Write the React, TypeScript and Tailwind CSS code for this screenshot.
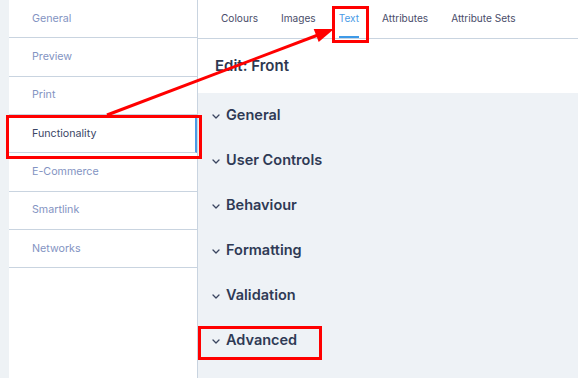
import React from "react";

const sideItems = ["General", "Preview", "Print", "Functionality", "E-Commerce", "Smartlink", "Networks"];
const tabs = ["Colours", "Images", "Text", "Attributes", "Attribute Sets"];
const sections = ["General", "User Controls", "Behaviour", "Formatting", "Validation", "Advanced"];

function Chevron() {
  return (
    <svg width="8" height="5" viewBox="0 0 8 5" className="mt-[2px]">
      <polyline points="1,1 4,4 7,1" fill="none" stroke="#3a4560" strokeWidth="1.3" strokeLinecap="round" strokeLinejoin="round" />
    </svg>
  );
}

export default function App() {
  return (
    <div
      className="relative flex w-[578px] h-[378px] overflow-hidden bg-white"
      style={{ fontFamily: "Inter, 'Noto Sans', sans-serif" }}
    >
      <div className="w-[9px] shrink-0 bg-[#eef2f5]" />
      <div className="w-[189px] shrink-0 border-r border-[#c9d4e0] flex flex-col">
        {sideItems.map((s) => {
          const active = s === "Functionality";
          return (
            <div
              key={s}
              className={`h-[38.33px] shrink-0 border-b border-[#c9d4e0] flex items-center pl-[23px] text-[10.7px] ${
                active ? "text-[#3b4666] border-r-2 border-r-[#4a9be6]" : "text-[#8393c2]"
              }`}
            >
              {s}
            </div>
          );
        })}
      </div>
      <div className="flex-1 flex flex-col">
        <div className="h-[39px] shrink-0 border-b border-[#c9d4e0] flex pl-[23px] gap-[23px]">
          {tabs.map((t) => {
            const active = t === "Text";
            return (
              <div
                key={t}
                className={`h-full flex items-center pt-[2px] text-[10.1px] border-b-2 ${
                  active ? "text-[#4a9be6] border-[#3d9ae8]" : "text-[#4a4d6a] border-transparent"
                }`}
              >
                {t}
              </div>
            );
          })}
        </div>
        <div className="h-[54px] shrink-0 flex items-center pl-[17px] text-[15px] font-semibold text-[#2e3850]">
          Edit: Front
        </div>
        <div className="flex-1 bg-[#eef2f6] flex flex-col">
          {sections.map((s) => (
            <div key={s} className="h-[45px] shrink-0 flex items-center pl-[14px] gap-[6px] pb-[1px]">
              <Chevron />
              <span className="text-[14.5px] font-semibold text-[#2f3a55]">{s}</span>
            </div>
          ))}
        </div>
      </div>
      <svg className="absolute inset-0 pointer-events-none" width="578" height="378" viewBox="0 0 578 378">
        <rect x="7.5" y="116.5" width="193" height="41" fill="none" stroke="#ff0000" strokeWidth="3" />
        <rect x="333.5" y="7.5" width="34" height="34" fill="none" stroke="#ff0000" strokeWidth="3" />
        <rect x="199.5" y="327.5" width="121" height="31" fill="none" stroke="#ff0000" strokeWidth="3" />
        <line x1="107" y1="115" x2="318" y2="35" stroke="#ff0000" strokeWidth="3" />
        <polygon points="334,29 313.7,28.9 318.7,41.9" fill="#ff0000" />
      </svg>
    </div>
  );
}
